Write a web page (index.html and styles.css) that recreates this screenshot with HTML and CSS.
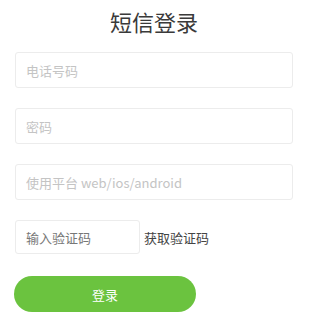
FILE: index.html
```html
<!DOCTYPE html>
<html lang="zh">
<head>
<meta charset="utf-8">
<title>短信登录</title>
<link rel="stylesheet" href="styles.css">
</head>
<body>
<div class="page">
  <h1 class="title">短信登录</h1>
  <form class="form">
    <input class="field" type="text" placeholder="电话号码">
    <input class="field" type="password" placeholder="密码">
    <input class="field" type="text" placeholder="使用平台 web/ios/android">
    <div class="code-row">
      <input class="field code" type="text" placeholder="输入验证码">
      <span class="get-code">获取验证码</span>
    </div>
    <button class="submit" type="button">登录</button>
  </form>
</div>
</body>
</html>
```
FILE: styles.css
```css
* { box-sizing: border-box; }
html, body { margin: 0; padding: 0; background: #fff; }
body {
  font-family: "Noto Sans CJK SC", "Noto Sans", "Liberation Sans", sans-serif;
  color: #333;
}
.page {
  padding: 0 17px 0 15px;
}
.title {
  margin: 0;
  padding-top: 6px;
  height: 52px;
  font-size: 22px;
  line-height: 30px;
  font-weight: 400;
  text-align: center;
  color: #3a3a3a;
}
.form {
  display: flex;
  flex-direction: column;
  gap: 20px;
}
.field {
  display: block;
  width: 278px;
  height: 36px;
  margin: 0;
  padding: 0 10px;
  border: 1px solid #ececec;
  border-radius: 3px;
  font-family: inherit;
  font-size: 13px;
  color: #333;
  background: #fff;
  outline: none;
}
.field::placeholder { color: #c4c4c4; }
.code-row {
  display: flex;
  align-items: center;
  gap: 4px;
  height: 36px;
}
.field.code {
  width: 125px;
  height: 34px;
  margin-top: -2px;
}
.field.code::placeholder { color: #777; }
.get-code {
  font-size: 13px;
  color: #444;
  margin-top: -2px;
}
.submit {
  width: 182px;
  height: 36px;
  margin-left: -1px;
  border: none;
  border-radius: 18px;
  background: #6bc33f;
  color: #fff;
  font-family: inherit;
  font-size: 13px;
  cursor: pointer;
}
```
